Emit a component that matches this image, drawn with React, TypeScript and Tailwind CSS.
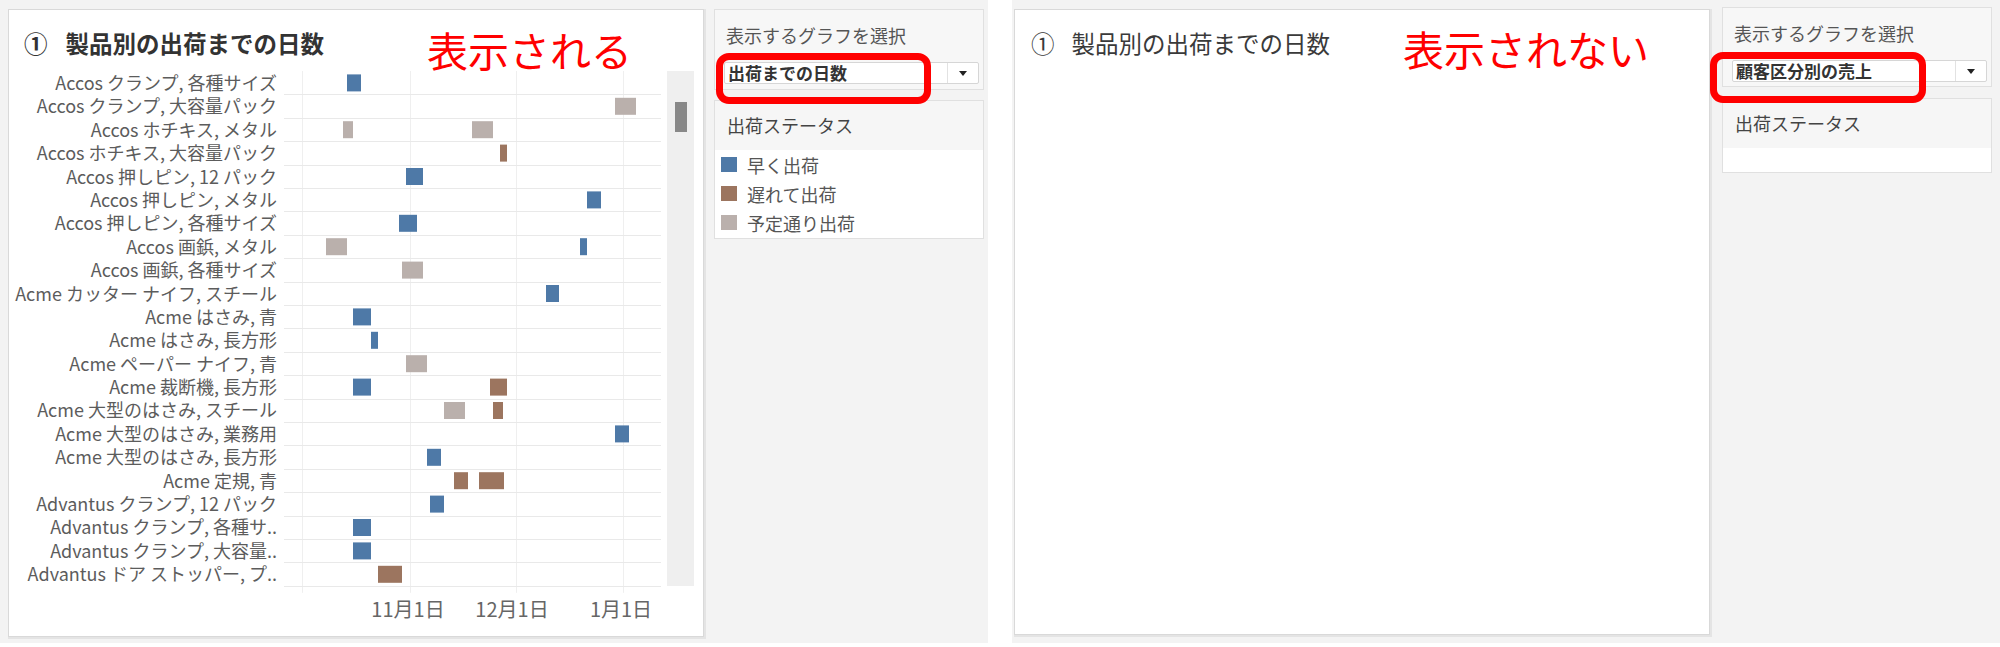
import React from 'react'

type Status = 'early' | 'late' | 'ontime'

const colors: Record<Status, string> = {
  early: '#4e79a7',
  late: '#9c755f',
  ontime: '#bab0ac',
}

const rows: { label: string; bars: [Status, number, number][] }[] = [
  { label: 'Accos クランプ, 各種サイズ', bars: [['early', 347, 361]] },
  { label: 'Accos クランプ, 大容量パック', bars: [['ontime', 615, 636]] },
  { label: 'Accos ホチキス, メタル', bars: [['ontime', 343, 353], ['ontime', 472, 493]] },
  { label: 'Accos ホチキス, 大容量パック', bars: [['late', 500, 507]] },
  { label: 'Accos 押しピン, 12 パック', bars: [['early', 406, 423]] },
  { label: 'Accos 押しピン, メタル', bars: [['early', 587, 601]] },
  { label: 'Accos 押しピン, 各種サイズ', bars: [['early', 399, 417]] },
  { label: 'Accos 画鋲, メタル', bars: [['ontime', 326, 347], ['early', 580, 587]] },
  { label: 'Accos 画鋲, 各種サイズ', bars: [['ontime', 402, 423]] },
  { label: 'Acme カッター ナイフ, スチール', bars: [['early', 546, 559]] },
  { label: 'Acme はさみ, 青', bars: [['early', 353, 371]] },
  { label: 'Acme はさみ, 長方形', bars: [['early', 371, 378]] },
  { label: 'Acme ペーパー ナイフ, 青', bars: [['ontime', 406, 427]] },
  { label: 'Acme 裁断機, 長方形', bars: [['early', 353, 371], ['late', 490, 507]] },
  { label: 'Acme 大型のはさみ, スチール', bars: [['ontime', 444, 465], ['late', 493, 503]] },
  { label: 'Acme 大型のはさみ, 業務用', bars: [['early', 615, 629]] },
  { label: 'Acme 大型のはさみ, 長方形', bars: [['early', 427, 441]] },
  { label: 'Acme 定規, 青', bars: [['late', 454, 468], ['late', 479, 504]] },
  { label: 'Advantus クランプ, 12 パック', bars: [['early', 430, 444]] },
  { label: 'Advantus クランプ, 各種サ..', bars: [['early', 353, 371]] },
  { label: 'Advantus クランプ, 大容量..', bars: [['early', 353, 371]] },
  { label: 'Advantus ドア ストッパー, プ..', bars: [['late', 378, 402]] },
]

const ROW_H = 23.4
const PLOT_X = 284
const PLOT_W = 377
const PLOT_H = rows.length * ROW_H

const Dropdown: React.FC<{ value: string }> = ({ value }) => (
  <div className="ml-[9px] mr-[4px] h-[22px] bg-white border border-[#d6d6d6] rounded-[2px] flex items-center">
    <span className="flex-1 pl-[3px] text-[17px] leading-[20px] font-bold text-[#333]">{value}</span>
    <div className="w-[31px] h-full border-l border-[#e2e2e2] flex items-center justify-center">
      <span className="w-0 h-0 border-l-[4px] border-r-[4px] border-t-[5px] border-l-transparent border-r-transparent border-t-[#222]" />
    </div>
  </div>
)

const Controls: React.FC<{ value: string; legend: boolean }> = ({ value, legend }) => (
  <div className="w-[270px] flex flex-col">
    <div className={`${legend ? 'h-[81px]' : 'h-[80px]'} border border-[#e0e0e0] bg-[#f7f7f7]`}>
      <div className="pl-[11px] pt-[13px] h-[24px] box-content text-[18px] leading-[24px] text-[#555]">
        表示するグラフを選択
      </div>
      <div className="mt-[15px]">
        <Dropdown value={value} />
      </div>
    </div>
    <div className={`${legend ? 'mt-[10px] h-[139px]' : 'mt-[11px] h-[75px]'} border border-[#e0e0e0] bg-white flex flex-col`}>
      <div className="h-[49px] bg-[#f6f6f6] pl-[12px] flex items-center text-[18px] text-[#444]">
        出荷ステータス
      </div>
      {legend && (
        <div className="flex flex-col">
          {([
            ['early', '早く出荷'],
            ['late', '遅れて出荷'],
            ['ontime', '予定通り出荷'],
          ] as [Status, string][]).map(([k, t]) => (
            <div key={k} className="h-[29px] flex items-center pl-[6px]">
              <span
                className="w-[16px] h-[15px]"
                style={{ backgroundColor: colors[k] }}
              />
              <span className="ml-[10px] text-[18px] leading-[24px] text-[#555]">{t}</span>
            </div>
          ))}
        </div>
      )}
    </div>
  </div>
)

const Highlight: React.FC<{ className: string }> = ({ className }) => (
  <div className={`absolute border-[7px] border-[#ff0000] rounded-[13px] ${className}`} />
)

const Chart: React.FC = () => (
  <div className="mt-[12px] flex">
    <div className="w-[268px] flex flex-col">
      {rows.map((r) => (
        <div
          key={r.label}
          className="h-[23.4px] leading-[23.4px] text-right text-[18px] text-[#5c5c5c] whitespace-nowrap"
        >
          {r.label}
        </div>
      ))}
    </div>
    <svg width={PLOT_W} height={560} className="ml-[7px] shrink-0">
      {[18, 126, 232, 339].map((x) => (
        <line key={x} x1={x + 0.5} x2={x + 0.5} y1={0} y2={PLOT_H + 7} stroke="#efefef" strokeWidth={1} />
      ))}
      {rows.map((_, i) => (
        <line
          key={i}
          x1={0}
          x2={PLOT_W}
          y1={Math.round((i + 1) * ROW_H) + 0.5}
          y2={Math.round((i + 1) * ROW_H) + 0.5}
          stroke="#e9e9e9"
          strokeWidth={1}
        />
      ))}
      {rows.map((r, i) =>
        r.bars.map(([s, a, b], j) => (
          <rect
            key={`${i}-${j}`}
            x={a - PLOT_X}
            y={i * ROW_H + 3.4}
            width={b - a}
            height={17}
            fill={colors[s]}
          />
        ))
      )}
      {[
        ['11月1日', 124],
        ['12月1日', 228],
        ['1月1日', 337],
      ].map(([t, x]) => (
        <text
          key={t as string}
          x={x as number}
          y={537}
          textAnchor="middle"
          dominantBaseline="central"
          fontSize={20}
          fill="#666"
          className="font-['Noto_Sans_CJK_JP',sans-serif]"
        >
          {t}
        </text>
      ))}
    </svg>
    <div className="ml-[6px] w-[27px] h-[515px] bg-[#efefef] pt-[31px] pl-[8px]">
      <div className="w-[12px] h-[30px] bg-[#888]" />
    </div>
  </div>
)

export default function App() {
  return (
    <div className="w-[2000px] h-[647px] bg-white flex font-['Noto_Sans_CJK_JP',sans-serif]">
      {/* left: shown */}
      <div className="relative w-[988px] h-[643px] bg-[#f3f3f3] flex pl-[8px] pt-[9px]">
        <div className="w-[696px] h-[628px] bg-white border border-[#d9d9d9] shadow-[1px_1px_0_1px_#e4e4e4] flex flex-col">
          <div className="pl-[15px] pt-[17px] h-[32px] box-content flex items-center text-[23.5px] leading-[32px] font-bold text-[#333]">
            <span>①</span>
            <span className="ml-[18px]">製品別の出荷までの日数</span>
          </div>
          <Chart />
        </div>
        <div className="ml-[10px]">
          <Controls value="出荷までの日数" legend />
        </div>
        <div className="absolute left-[427px] top-[29px] text-[41px] leading-[41px] text-[#ff0000]">表示される</div>
        <Highlight className="left-[716px] top-[53px] w-[215px] h-[51px]" />
      </div>

      {/* right: not shown */}
      <div className="relative ml-[24px] w-[988px] h-[643px] bg-[#f3f3f3] flex pl-[2px] pt-[9px]">
        <div className="w-[696px] h-[626px] bg-white border border-[#d9d9d9] shadow-[1px_1px_0_1px_#e4e4e4] flex flex-col">
          <div className="pl-[16px] pt-[17px] h-[32px] box-content flex items-center text-[23.5px] leading-[32px] text-[#3a3a3a]">
            <span>①</span>
            <span className="ml-[17px]">製品別の出荷までの日数</span>
          </div>
        </div>
        <div className="ml-[12px] -mt-[2px]">
          <Controls value="顧客区分別の売上" legend={false} />
        </div>
        <div className="absolute left-[391px] top-[28px] text-[41px] leading-[41px] text-[#ff0000]">表示されない</div>
        <Highlight className="left-[698px] top-[52px] w-[216px] h-[51px]" />
      </div>
    </div>
  )
}
